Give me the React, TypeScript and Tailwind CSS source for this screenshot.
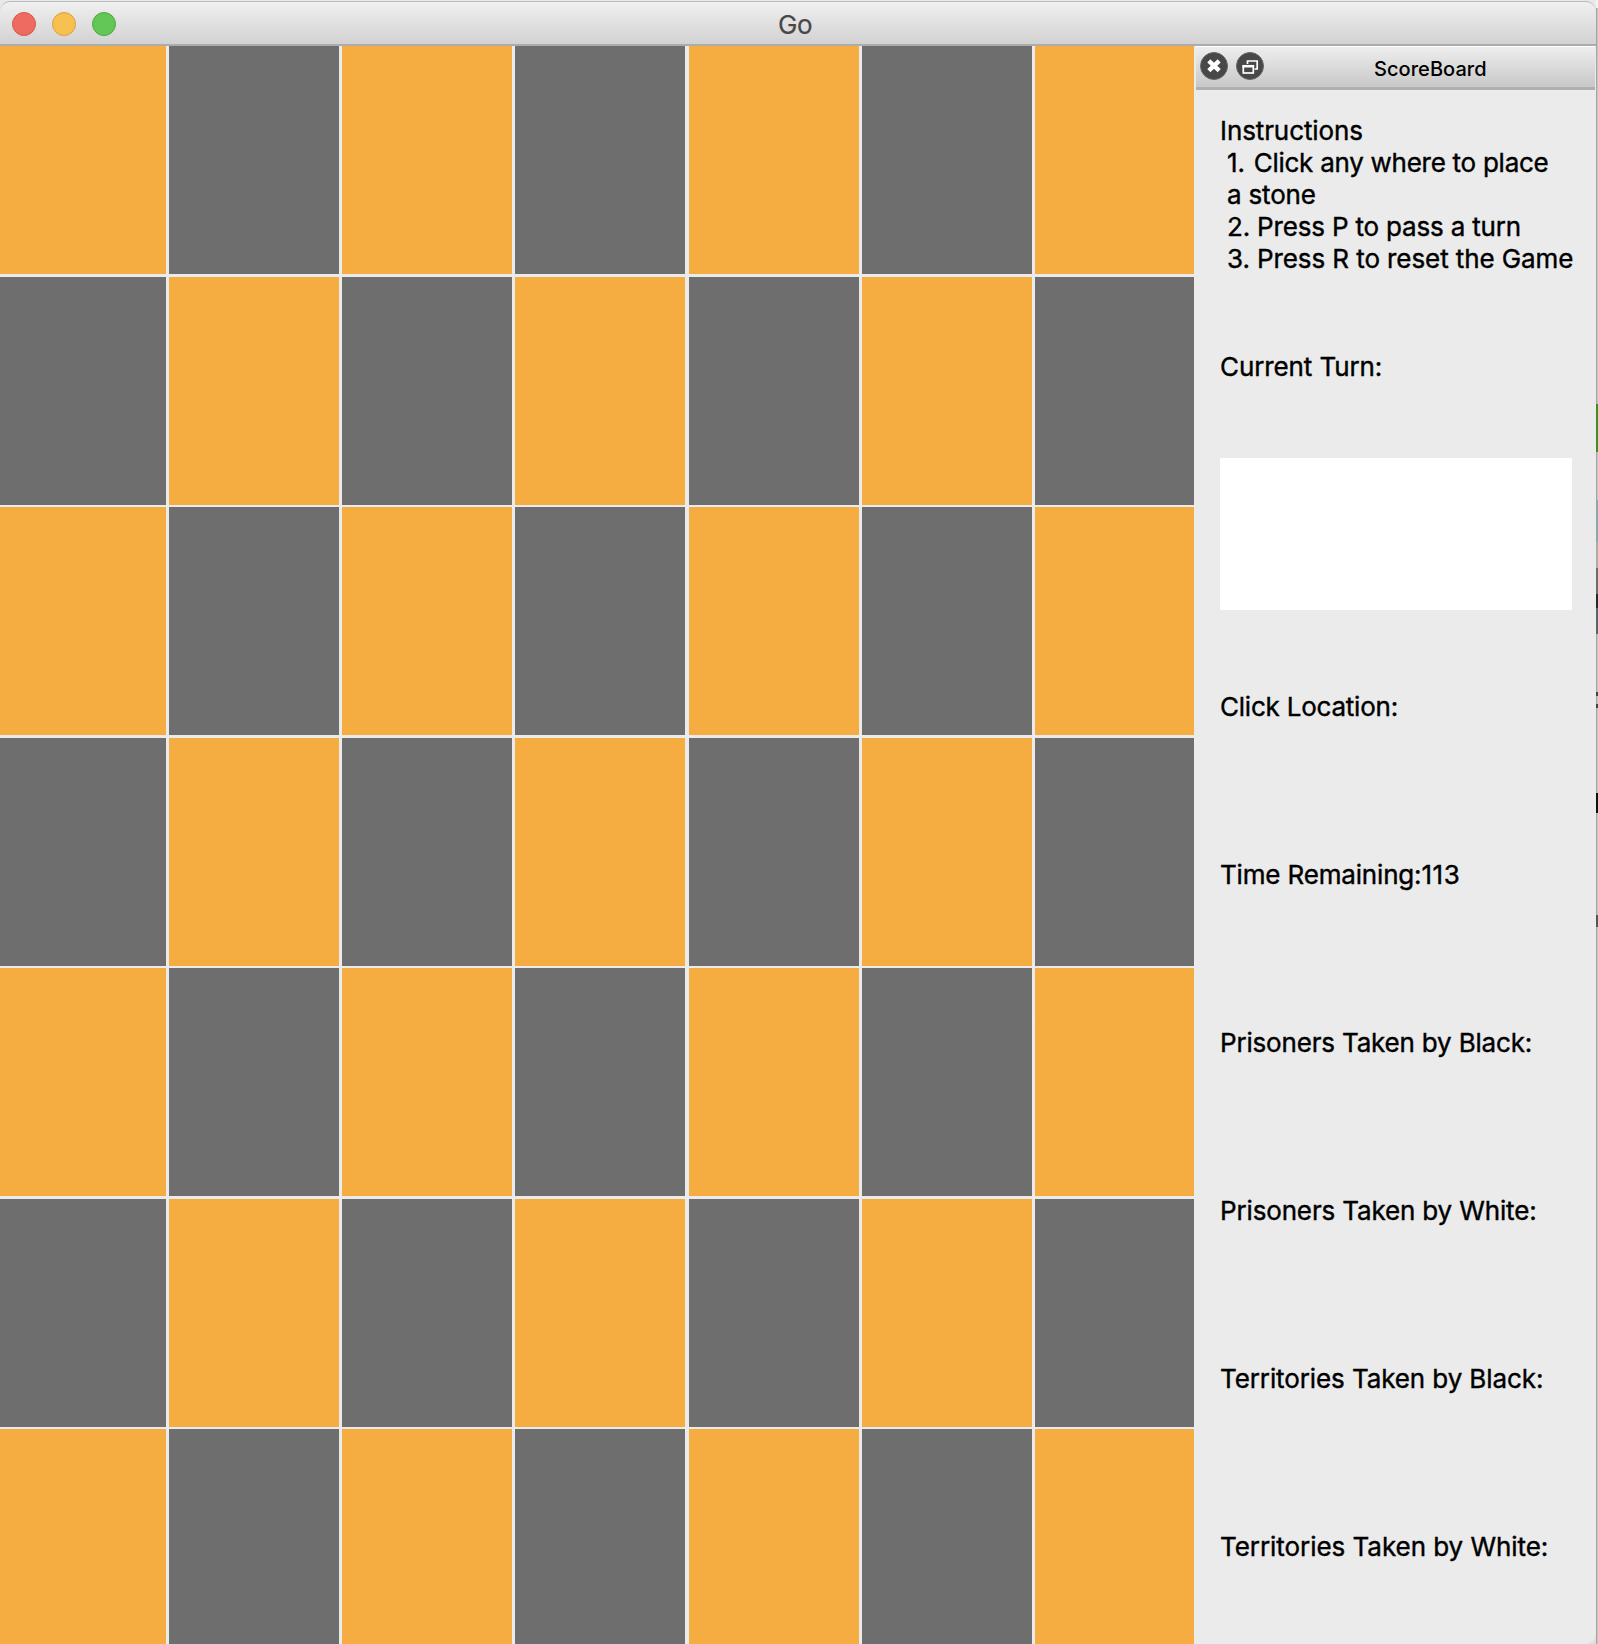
const rows = [0, 1, 2, 3, 4, 5, 6];
const cols = [0, 1, 2, 3, 4, 5, 6];

const labels: [string, string, string][] = [
  ["Click Location:", "", "tracking-[-0.22px]"],
  ["Time Remaining:", "113", "tracking-[-0.17px]"],
  ["Prisoners Taken by Black:", "", "tracking-[-0.18px]"],
  ["Prisoners Taken by White:", "", "tracking-[-0.15px]"],
  ["Territories Taken by Black:", "", "tracking-[-0.1px]"],
  ["Territories Taken by White:", "", "tracking-[-0.05px]"],
];

function TitleBar() {
  return (
    <header className="relative mt-px flex h-[45px] shrink-0 items-center justify-center rounded-t-[10px] border-t border-[#b9b9b9] border-b-2 border-b-[#acacac] bg-linear-to-b from-[#f0f0f0] to-[#d2d2d2]">
      <div className="absolute left-3 top-[10px] flex gap-4">
        <span className="size-6 rounded-full border border-[#d9564b] bg-[#ed6b60]" />
        <span className="size-6 rounded-full border border-[#dca03e] bg-[#f6c151]" />
        <span className="size-6 rounded-full border border-[#4fa73f] bg-[#62c756]" />
      </div>
      <h1 className="pr-[6px] pt-1 text-[26px] leading-8 tracking-[-0.4px] text-[#474747] [-webkit-text-stroke:0.2px_#474747]">Go</h1>
    </header>
  );
}

function Board() {
  return (
    <main className="grid h-[1598px] w-[1194px] shrink-0 grid-cols-[169px_173px_173px_174px_173px_173px_159px] grid-rows-[231px_230px_231px_230px_231px_230px_215px] overflow-hidden">
      {rows.map((r) =>
        cols.map((c) => (
          <div
            key={`${r}-${c}`}
            className={`h-[228px] ${c === 0 ? "w-[166px]" : "w-[170px]"} ${(r + c) % 2 === 0 ? "bg-[#f5ad42]" : "bg-[#6e6e6e]"}`}
          />
        )),
      )}
    </main>
  );
}

function DockButtons() {
  return (
    <svg className="absolute left-1 top-[5px]" width="64" height="28" viewBox="0 0 64 28">
      <circle cx="14" cy="14" r="13.5" fill="#484848" stroke="#666" />
      <path d="M8.800 8.800l10.400 9.800M19.200 8.800L8.800 18.600" stroke="#fff" strokeWidth="4.4" />
      <circle cx="50" cy="14" r="13.5" fill="#484848" stroke="#666" />
      <path d="M47.500 12V9H57.200v8H54.500" fill="none" stroke="#fff" strokeWidth="1.7" />
      <rect x="43.300" y="13.800" width="10" height="7.200" fill="none" stroke="#fff" strokeWidth="1.7" />
      <path d="M42.500 14.300h11.600" stroke="#fff" strokeWidth="2.400" />
    </svg>
  );
}

function ScoreBoard() {
  return (
    <aside className="ml-[2px] flex h-[1598px] w-[400px] shrink-0 flex-col">
      <div className="relative flex h-11 w-[399px] shrink-0 items-center border-b-[3px] border-t border-t-white border-b-[#b0b0b0] bg-linear-to-b from-[#eeeeee] to-[#c8c8c8] pl-[178px]">
        <DockButtons />
        <h2 className="pt-1 text-[20px] font-medium leading-6 tracking-[0.05px]">ScoreBoard</h2>
      </div>
      <div className="flex flex-col px-6 pt-[25px] text-[26px] leading-8 [-webkit-text-stroke:0.4px_black]">
        <div className="h-[160px] w-[352px] whitespace-nowrap">
          <p className="tracking-[-0.1px]">Instructions</p>
          <ol className="pl-[7px] tracking-[-0.18px]">
            <li><span className="mr-[2px]">1.</span><span className="tracking-[-0.27px]"> Click any where to place</span><br />a stone</li>
            <li>2. Press P to pass a turn</li>
            <li className="tracking-[-0.09px]">3. Press R to reset the Game</li>
          </ol>
        </div>
        <p className="mt-[76px] tracking-[-0.1px]">Current Turn:</p>
        <div className="mt-[75px] h-[152px] w-[352px] bg-white" />
        <div className="mt-[81px] flex flex-col gap-[136px] whitespace-nowrap">
          {labels.map(([text, value, tracking]) => (
            <p key={text} className={tracking}>
              {text}
              {value && <span className="tracking-[0.6px]">{value}</span>}
            </p>
          ))}
        </div>
      </div>
    </aside>
  );
}

function DesktopSliver() {
  return (
    <div className="flex h-[1644px] w-[2px] shrink-0 flex-col bg-linear-to-r from-[#a5a5a5] from-50% to-[#c4c4c4] to-50%">
      <div className="h-[8px] bg-[#f3f3f3]" />
      <div className="mt-[376px] h-5" />
      <div className="h-12 bg-[#3d8f1f]" />
      <div className="mt-12 h-[42px] bg-[#8fa5b0]" />
      <div className="h-[26px] bg-[#aeaba0]" />
      <div className="h-[26px] bg-[#6f6c66]" />
      <div className="h-[14px] bg-[#26292b]" />
      <div className="h-[26px] bg-[#5c6468]" />
      <div className="mt-[58px] h-1 bg-[#444]" />
      <div className="mt-[8px] h-1 bg-[#444]" />
      <div className="mt-[85px] h-5 bg-[#111]" />
      <div className="mt-[102px] h-3 bg-[#555]" />
    </div>
  );
}

export default function App() {
  return (
    <div className="flex h-[1644px] w-[1598px] overflow-hidden bg-[#dedede] font-['Inter',sans-serif] text-black">
      <div className="flex w-[1596px] shrink-0 flex-col overflow-hidden rounded-br-[10px] bg-linear-to-b from-[#e9e9e9] from-[20px] to-[#ebebeb] to-[20px]">
        <TitleBar />
        <div className="flex">
          <Board />
          <ScoreBoard />
        </div>
      </div>
      <DesktopSliver />
    </div>
  );
}
